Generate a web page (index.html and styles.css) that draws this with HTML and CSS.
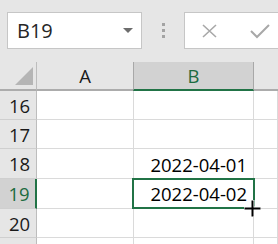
FILE: index.html
```html
<!DOCTYPE html>
<html lang="en">
<head>
	<meta charset="UTF-8">
	<title>B19</title>
	<link rel="stylesheet" href="styles.css">
</head>
<body>
	<div id="frame">
		<div class="bar">
			<div class="name-box">
				<span class="name">B19</span>
				<svg class="drop" width="10" height="6" viewBox="0 0 10 6"><path d="M0 0h10L5 5z" fill="#6d6d6d"/></svg>
			</div>
			<div class="dots"><i></i><i></i><i></i></div>
			<div class="fx-box">
				<svg class="btn" width="18" height="16" viewBox="0 0 18 16"><path d="M2 2l13 12M15 2L2 14" stroke="#a8a8a8" stroke-width="1.6" fill="none"/></svg>
				<svg class="btn" width="22" height="16" viewBox="0 0 22 16"><path d="M2 8l6 6L20 2" stroke="#a8a8a8" stroke-width="2" fill="none"/></svg>
			</div>
		</div>

		<div class="grid">
			<div class="corner"><svg width="18" height="18" viewBox="0 0 18 18"><path d="M18 0v18H0z" fill="#b5b5b5"/></svg></div>
			<div class="col-head">A</div>
			<div class="col-head on">B</div>
			<div class="col-head rest"></div>

			<div class="row-head">16</div><div class="cell"></div><div class="cell"></div><div class="cell"></div>
			<div class="row-head">17</div><div class="cell"></div><div class="cell"></div><div class="cell"></div>
			<div class="row-head">18</div><div class="cell"></div><div class="cell val">2022-04-01</div><div class="cell"></div>
			<div class="row-head on">19</div><div class="cell"></div>
			<div class="cell val sel">2022-04-02
				<div class="sel-box"></div>
				<svg class="cursor" width="19" height="19" viewBox="0 0 19 19"><path d="M9.5 1v17M1 9.5h17" stroke="#fff" stroke-width="4"/><path d="M9.5 1.5v16M1.5 9.5h16" stroke="#000" stroke-width="2"/></svg>
			</div>
			<div class="cell"></div>
			<div class="row-head">20</div><div class="cell"></div><div class="cell"></div><div class="cell"></div>
			<div class="row-head"></div><div class="cell"></div><div class="cell"></div><div class="cell"></div>
		</div>
	</div>
</body>
</html>
```

FILE: styles.css
```css
* {
	margin: 0;
	padding: 0;
	box-sizing: border-box;
}

body {
	background-color: #fff;
	font-family: "Open Sans", "Liberation Sans", sans-serif;
}

#frame {
	width: 278px;
	height: 244px;
	overflow: hidden;
}

.bar {
	display: flex;
	height: 62px;
	padding: 12px 0 0 7px;
	background: #e6e6e6;
}

.name-box {
	display: flex;
	align-items: center;
	justify-content: space-between;
	width: 135px;
	height: 37px;
	padding: 0 8px 0 9px;
	background: #fff;
	border: 1px solid #c6c6c6;
}
.name {
	font-size: 20px;
	color: #262626;
}
.drop {
	margin-top: 1px;
}

.dots {
	display: flex;
	flex-direction: column;
	align-items: center;
	justify-content: center;
	gap: 3px;
	width: 42px;
	height: 37px;
}
.dots > i {
	display: block;
	width: 3px;
	height: 3px;
	background: #a3a3a3;
}

.fx-box {
	display: flex;
	align-items: center;
	gap: 30px;
	flex: 1;
	height: 37px;
	padding-left: 16px;
	background: #fff;
	border: 1px solid #c6c6c6;
	border-right: 0;
}

.grid {
	display: grid;
	grid-template-columns: 37px 97px 120px 1fr;
	grid-template-rows: 29px 29px 29px 30px 30px 29px 29px;
	font-size: 18.5px;
}

.corner {
	display: flex;
	align-items: flex-end;
	padding: 0 0 4px 15px;
	background: #e6e6e6;
	border-right: 1px solid #bdbdbd;
	border-bottom: 2px solid #acacac;
}

.col-head {
	display: flex;
	align-items: center;
	justify-content: center;
	background: #e6e6e6;
	color: #1a1a1a;
	border-right: 1px solid #bdbdbd;
	border-bottom: 2px solid #acacac;
	line-height: 24px;
}
.col-head.on {
	background: #d2d2d2;
	color: #1d6b40;
	border-left: 1px solid #a8a8a8;
	border-right: 1px solid #a8a8a8;
	border-bottom-color: #217346;
	margin-left: -1px;
}
.col-head.rest {
	border-right: 0;
}

.row-head {
	display: flex;
	align-items: center;
	justify-content: center;
	padding: 1px 0 0 3px;
	background: #e6e6e6;
	color: #1a1a1a;
	border-right: 1px solid #bdbdbd;
	border-bottom: 1px solid #cfcfcf;
	line-height: 24px;
}
.row-head.on {
	background: #d2d2d2;
	color: #1d6b40;
	border-right: 2px solid #217346;
}

.cell {
	display: flex;
	align-items: flex-end;
	justify-content: flex-end;
	padding: 0 6px 1px 0;
	border-right: 1px solid #dadada;
	border-bottom: 1px solid #dadada;
	color: #000;
	line-height: 24px;
}
.cell.sel {
	position: relative;
	padding-bottom: 2px;
}
.sel-box {
	position: absolute;
	top: -1px;
	left: -2px;
	right: -2px;
	bottom: -1px;
	border: 2px solid #217346;
}
.cursor {
	position: absolute;
	right: -9px;
	bottom: -10px;
}
```
